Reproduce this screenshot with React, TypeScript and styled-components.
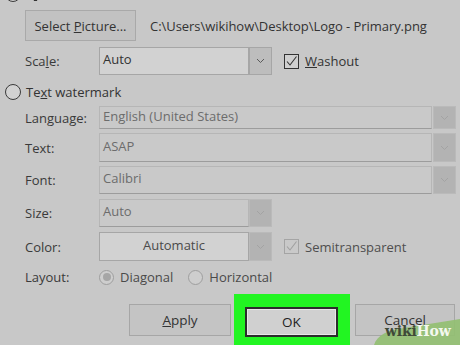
import React from "react";
import styled, { createGlobalStyle } from "styled-components";

const Global = createGlobalStyle`
  html, body { margin: 0; padding: 0; background: #c8c8c8; }
  body { font-family: "Open Sans", "Noto Sans", sans-serif; font-size: 13px; color: #383838; overflow: hidden; }
  #root { width: 460px; height: 345px; }
`;

const Page = styled.div`
  position: relative;
  width: 460px;
  height: 345px;
  overflow: hidden;
  background: #c8c8c8;
`;

const Row = styled.div<{ $mt: number; $h: number; $indent?: number }>`
  display: flex;
  align-items: center;
  margin-top: ${(p) => p.$mt}px;
  height: ${(p) => p.$h}px;
  padding-left: ${(p) => p.$indent ?? 25}px;
`;

const Label = styled.div`
  width: 74px;
  flex: none;
  color: #3a3a3a;
  white-space: nowrap;
`;

const Button = styled.button<{ $w: number }>`
  box-sizing: border-box;
  width: ${(p) => p.$w}px;
  height: 100%;
  background: #c2c2c2;
  border: 1px solid #a9a9a9;
  font: inherit;
  color: #333;
  padding: 0;
  flex: none;
`;

const PathText = styled.div`
  margin-left: 14px;
  color: #333;
  white-space: nowrap;
  letter-spacing: -0.05px;
`;

const Drop = styled.div<{ $w: number }>`
  display: flex;
  height: 100%;
  width: ${(p) => p.$w}px;
  flex: none;
`;

const Field = styled.div<{ $on?: boolean; $center?: boolean }>`
  box-sizing: border-box;
  flex: 1;
  height: 100%;
  display: flex;
  align-items: center;
  justify-content: ${(p) => (p.$center ? "center" : "flex-start")};
  padding-left: ${(p) => (p.$center ? 0 : 3)}px;
  padding-bottom: 4px;
  background: ${(p) => (p.$on ? "#d2d2d2" : "#c9c9c9")};
  border: 1px solid ${(p) => (p.$on ? "#a6a6a6" : "#b6b6b6")};
  border-bottom-color: ${(p) => (p.$on ? "#a6a6a6" : "#9c9c9c")};
  color: ${(p) => (p.$on ? "#333" : "#6c6c6c")};
  white-space: nowrap;
  overflow: hidden;
`;

const FieldText = styled.span<{ $muted?: boolean }>`
  color: ${(p) => (p.$muted ? "#4a4a4a" : "inherit")};
`;

const Arrow = styled.div<{ $on?: boolean; $gap?: number }>`
  box-sizing: border-box;
  width: 23px;
  flex: none;
  height: 100%;
  margin-left: ${(p) => p.$gap ?? 0}px;
  background: ${(p) => (p.$on ? "#bdbdbd" : "#b3b3b3")};
  border: 1px solid ${(p) => (p.$on ? "#a6a6a6" : "#bababa")};
  display: flex;
  align-items: center;
  justify-content: center;
  color: ${(p) => (p.$on ? "#5a5a5a" : "#a2a2a2")};
`;

const Check = styled.div<{ $on?: boolean }>`
  box-sizing: border-box;
  width: 15px;
  height: 15px;
  flex: none;
  margin-left: 12px;
  border: 1px solid ${(p) => (p.$on ? "#333" : "#a4a4a4")};
  background: ${(p) => (p.$on ? "#d0d0d0" : "#c9c9c9")};
  display: flex;
  align-items: center;
  justify-content: center;
  color: ${(p) => (p.$on ? "#333" : "#a0a0a0")};
`;

const CheckText = styled.span<{ $on?: boolean }>`
  margin-left: 6px;
  color: ${(p) => (p.$on ? "#333" : "#4e4e4e")};
  white-space: nowrap;
`;

const Radio = styled.div<{ $size: number; $dark?: boolean; $dot?: boolean }>`
  box-sizing: border-box;
  width: ${(p) => p.$size}px;
  height: ${(p) => p.$size}px;
  border-radius: 50%;
  flex: none;
  border: ${(p) => (p.$dark ? "1.5px solid #3a3a3a" : "1px solid #9e9e9e")};
  background: ${(p) => (p.$dark ? "#d2d2d2" : "#cecece")};
  display: flex;
  align-items: center;
  justify-content: center;
  &::after {
    content: "";
    display: ${(p) => (p.$dot ? "block" : "none")};
    width: 8px;
    height: 8px;
    border-radius: 50%;
    background: #a6a6a6;
  }
`;

const RadioText = styled.span<{ $gap: number; $dark?: boolean }>`
  margin-left: ${(p) => p.$gap}px;
  color: ${(p) => (p.$dark ? "#333" : "#4a4a4a")};
  white-space: nowrap;
`;

const RadioGroup = styled.div`
  display: flex;
  align-items: center;
  margin-right: 15px;
  &:first-of-type { margin-left: 1px; }
`;

const ButtonBar = styled.div`
  display: flex;
  align-items: flex-start;
  margin-top: 6px;
  padding-left: 129px;
  height: 60px;
`;

const BarButton = styled.button<{ $w: number }>`
  box-sizing: border-box;
  margin-top: 10px;
  width: ${(p) => p.$w}px;
  height: 32px;
  background: #c4c4c4;
  border: 1px solid #a6a6a6;
  font: inherit;
  font-size: 13.5px;
  color: #333;
  padding: 0;
  flex: none;
`;

const Highlight = styled.div`
  box-sizing: border-box;
  width: 116px;
  height: 60px;
  margin-left: 3px;
  margin-right: 5px;
  background: #22f522;
  padding: 13px 0 0 11px;
  flex: none;
`;

const OkButton = styled.button`
  box-sizing: border-box;
  width: 93px;
  height: 30px;
  background: #d0d0d0;
  border: 2px solid #2c2c2c;
  box-shadow: inset 0 0 0 1px #e8e8e8;
  font: inherit;
  font-size: 13.5px;
  color: #222;
  padding: 0;
`;

const Logo = styled.div`
  position: absolute;
  right: 0;
  bottom: 0;
  width: 90px;
  height: 30px;
`;

const LogoShape = styled.svg`
  position: absolute;
  inset: 0;
`;

const LogoText = styled.div`
  position: absolute;
  left: 15px;
  top: 8px;
  font-family: "DejaVu Serif", "Liberation Serif", serif;
  font-weight: bold;
  font-size: 14px;
  letter-spacing: -0.2px;
  white-space: nowrap;
`;

const Wiki = styled.span`
  color: #3f4a38;
`;
const How = styled.span`
  color: #f4f8ef;
`;

const Chevron = ({ on }: { on?: boolean }) => (
  <svg width="9" height="6" viewBox="0 0 9 6">
    <path d="M1 1 L4.5 4.5 L8 1" fill="none" stroke="currentColor" strokeWidth={on ? 1 : 0.9} />
  </svg>
);

const Tick = () => (
  <svg width="13" height="13" viewBox="0 0 13 13">
    <path d="M2 6.5 L5 10 L11.5 1.5" fill="none" stroke="currentColor" strokeWidth="1.1" />
  </svg>
);

type DDProps = { w: number; text: string; on?: boolean; center?: boolean; gap?: number; muted?: boolean };
const Dropdown = ({ w, text, on, center, gap, muted }: DDProps) => (
  <Drop $w={w}>
    <Field $on={on} $center={center}>
      <FieldText $muted={muted}>{text}</FieldText>
    </Field>
    <Arrow $on={on} $gap={gap}>
      <Chevron on={on} />
    </Arrow>
  </Drop>
);

export default function App() {
  return (
    <Page>
      <Global />
      <Row $mt={-14} $h={16} $indent={5}>
        <Radio $size={16} $dark />
        <RadioText $gap={5} $dark>
          P<u>i</u>cture watermark
        </RadioText>
      </Row>
      <Row $mt={8} $h={31}>
        <Button $w={111}>
          Select <u>P</u>icture...
        </Button>
        <PathText>C:\Users\wikihow\Desktop\Logo - Primary.png</PathText>
      </Row>
      <Row $mt={6} $h={28}>
        <Label>
          Sca<u>l</u>e:
        </Label>
        <Dropdown w={173} text="Auto" on />
        <Check $on>
          <Tick />
        </Check>
        <CheckText $on>
          <u>W</u>ashout
        </CheckText>
      </Row>
      <Row $mt={9} $h={16} $indent={5}>
        <Radio $size={16} $dark />
        <RadioText $gap={5} $dark>
          Te<u>x</u>t watermark
        </RadioText>
      </Row>
      <Row $mt={6} $h={23}>
        <Label>Language:</Label>
        <Dropdown w={357} gap={1} text="English (United States)" />
      </Row>
      <Row $mt={4} $h={29}>
        <Label>Text:</Label>
        <Dropdown w={357} gap={1} text="ASAP" />
      </Row>
      <Row $mt={4} $h={28}>
        <Label>Font:</Label>
        <Dropdown w={357} gap={1} text="Calibri" />
      </Row>
      <Row $mt={5} $h={28}>
        <Label>Size:</Label>
        <Dropdown w={173} text="Auto" />
      </Row>
      <Row $mt={5} $h={29}>
        <Label>Color:</Label>
        <Drop $w={173}>
          <Field $on $center>
            <FieldText $muted>Automatic</FieldText>
          </Field>
          <Arrow>
            <Chevron />
          </Arrow>
        </Drop>
        <Check>
          <Tick />
        </Check>
        <CheckText>Semitransparent</CheckText>
      </Row>
      <Row $mt={5} $h={22}>
        <Label>Layout:</Label>
        <RadioGroup>
          <Radio $size={15} $dot />
          <RadioText $gap={6}>Diagonal</RadioText>
        </RadioGroup>
        <RadioGroup>
          <Radio $size={15} />
          <RadioText $gap={6}>Horizontal</RadioText>
        </RadioGroup>
      </Row>
      <ButtonBar>
        <BarButton $w={102}>
          <u>A</u>pply
        </BarButton>
        <Highlight>
          <OkButton>OK</OkButton>
        </Highlight>
        <BarButton $w={100}>Cancel</BarButton>
      </ButtonBar>
      <Logo>
        <LogoShape width="90" height="30" viewBox="0 0 90 30">
          <path d="M4 30 C7 20 18 15 34 13 L90 4 L90 30 Z" fill="#93bf72" opacity="0.92" />
        </LogoShape>
        <LogoText>
          <Wiki>wiki</Wiki>
          <How>How</How>
        </LogoText>
      </Logo>
    </Page>
  );
}
